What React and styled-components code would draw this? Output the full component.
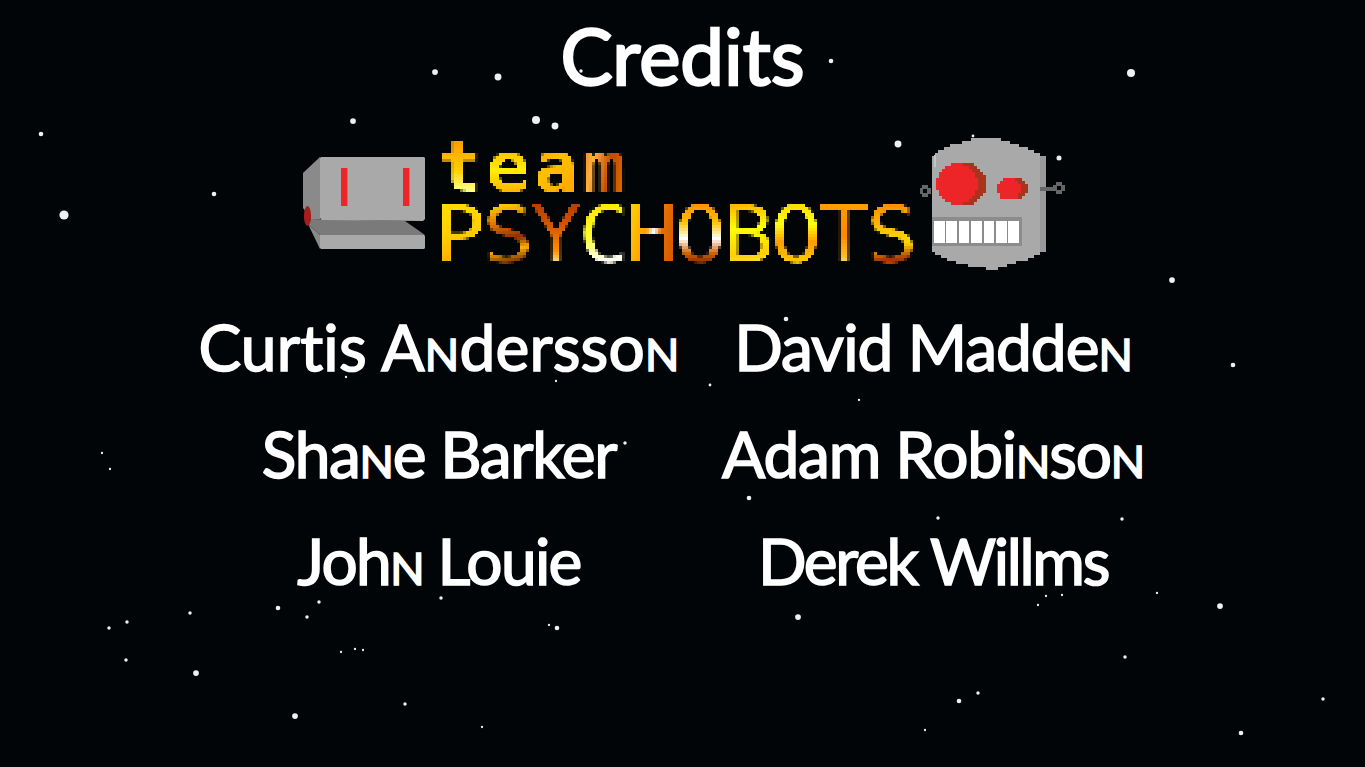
import React from 'react'
import styled, { createGlobalStyle } from 'styled-components'

const GlobalStyle = createGlobalStyle`
  html, body {
    margin: 0;
    background: #020508;
  }
`

const Page = styled.div`
  position: relative;
  width: 1365px;
  height: 767px;
  overflow: hidden;
  background: #020508;
  color: #fff;
  font-family: Lato, "Liberation Sans", sans-serif;
  font-variant-ligatures: none;
`

const Sky = styled.svg`
  position: absolute;
  inset: 0;
`

const Content = styled.div`
  position: relative;
  display: flex;
  flex-direction: column;
  align-items: center;
`

const Title = styled.h1`
  margin: 9px 0 0;
  height: 92px;
  font-size: 78px;
  line-height: 92px;
  font-weight: 400;
  -webkit-text-stroke: 2.4px #fff;
`

const LogoRow = styled.div`
  display: flex;
  align-items: flex-start;
  height: 136px;
  margin-top: 34px;
  padding-left: 3px;
`

const LeftBot = styled.svg`
  width: 125px;
  height: 136px;
  margin-right: 9px;
`

const RightBot = styled.svg`
  width: 146px;
  height: 136px;
  margin-left: 4px;
`

const Wordmark = styled.div`
  width: 480px;
  font-family: "DejaVu Sans Mono", monospace;
  filter: url(#pixelate);
`

const WordRow = styled.div`
  display: flex;
`

const fires = {
  p: 'linear-gradient(165deg, #ffe000 0, #ffd000 45%, #ff9c00 100%)',
  s1: 'linear-gradient(170deg, #ffd000 10%, #e07000 35%, #8a2c00 55%, #ffb000 68%, #5a1400 88%)',
  y: 'linear-gradient(180deg, #b84000 10%, #d85a00 40%, #ff9000 72%, #fff0b0 92%)',
  c: 'linear-gradient(170deg, #ffe600 10%, #ffff30 50%, #ffffff 82%, #ffd000 100%)',
  h: 'linear-gradient(100deg, #ffe000 0, #ffa000 40%, #fff 52%, #e87000 62%, #c85000 100%)',
  o1: 'linear-gradient(180deg, #ff9800 10%, #ffc000 32%, #fff 55%, #d06000 76%, #6a1c00 92%)',
  b: 'linear-gradient(175deg, #ffb800 10%, #ffff00 40%, #ffd000 75%, #ffe880 100%)',
  o2: 'linear-gradient(180deg, #ffe000 10%, #ffff10 35%, #ff9c00 60%, #ffe000 100%)',
  t: 'linear-gradient(180deg, #ff9c00 10%, #ff8800 50%, #ffc020 80%, #ffe890 92%)',
  s2: 'linear-gradient(175deg, #ff9000 10%, #ffc000 40%, #ffd800 62%, #a83400 82%, #e07000 100%)',
  t2: 'linear-gradient(180deg, #ff9c00 10%, #ffd000 55%, #ffff80 85%)',
  e: 'linear-gradient(180deg, #ffc800 30%, #fff000 55%, #ffb000 90%)',
  a: 'linear-gradient(135deg, #ff9000 0, #ffc000 45%, #ffa000 100%)',
  m: 'linear-gradient(100deg, #e87000 0, #ffb040 30%, #c04c00 60%, #e87800 100%)',
}

const Letter = styled.span`
  display: block;
  width: 48px;
  height: ${p => p.$line}px;
  flex: none;
  text-align: center;
  font-size: ${p => p.$size}px;
  font-weight: ${p => p.$weight};
  line-height: ${p => p.$line}px;
  color: transparent;
  transform: scaleX(${p => p.$wide});
  background: ${p => fires[p.$fire]};
  -webkit-background-clip: text;
  background-clip: text;
`

const Names = styled.div`
  display: grid;
  grid-template-columns: 494px 494px;
  grid-auto-rows: 107px;
  margin-top: 22px;
  padding-left: 7px;
`

const Name = styled.div`
  height: 107px;
  font-size: 64px;
  line-height: 107px;
  letter-spacing: ${p => p.$track}px;
  text-align: center;
  white-space: nowrap;
  -webkit-text-stroke: 1.6px #fff;
`

const SmallN = styled.span`
  font-variant: small-caps;
`

const stars = [
  [435, 72, 2.5], [498, 77, 3], [831, 61, 2], [1131, 73, 3.5], [41, 134, 2], [353, 121, 2.5],
  [536, 120, 3.5], [555, 126, 3], [898, 144, 3], [973, 136, 1.2], [214, 194, 2], [64, 215, 4],
  [1059, 158, 2.2], [1172, 280, 2.5], [786, 319, 2], [1233, 365, 2], [346, 377, 1], [710, 385, 1.2],
  [556, 381, 1], [859, 400, 1], [625, 443, 1.5], [102, 453, 1], [110, 469, 1], [749, 498, 2],
  [938, 518, 1.5], [1122, 519, 1.5], [1157, 593, 1], [1220, 606, 2.5], [1038, 605, 1], [1046, 596, 1],
  [1062, 595, 1], [798, 617, 2.5], [1125, 657, 1.5], [441, 598, 1.5], [319, 602, 1.5], [278, 608, 2],
  [307, 617, 1.5], [190, 613, 1.5], [127, 622, 1.5], [109, 628, 1.5], [549, 625, 1], [557, 628, 2],
  [126, 660, 1.5], [196, 673, 2.5], [341, 652, 1], [355, 649, 1], [363, 650, 1], [295, 716, 2.5],
  [405, 704, 1.5], [482, 727, 1], [959, 701, 2], [978, 693, 1.5], [925, 730, 1], [1241, 733, 2],
  [1323, 699, 1.5], [581, 71, 1.5],
]

const people = [
  { name: 'Curtis Andersson', track: 0.2 },
  { name: 'David Madden', track: -1 },
  { name: 'Shane Barker', track: -1.3 },
  { name: 'Adam Robinson', track: -1.2 },
  { name: 'John Louie', track: -1.7 },
  { name: 'Derek Willms', track: -2.3 },
]

const teamLetters = [['t', 't2'], ['e', 'e'], ['a', 'a'], ['m', 'm']]
const psychoLetters = [
  ['P', 'p'], ['S', 's1'], ['Y', 'y'], ['C', 'c'], ['H', 'h'],
  ['O', 'o1'], ['B', 'b'], ['O', 'o2'], ['T', 't'], ['S', 's2'],
]

// the font has capital-shaped n's in the original, so every n gets small caps
const spell = text =>
  text.split(/(n)/).map((part, i) =>
    part === 'n' ? <SmallN key={i}>n</SmallN> : part
  )

const lerp = (points, x) => {
  for (let i = 1; i < points.length; i++) {
    const [x0, y0] = points[i - 1]
    const [x1, y1] = points[i]
    if (x <= x1) return y0 + ((y1 - y0) * (x - x0)) / (x1 - x0)
  }
  return points[points.length - 1][1]
}

const headTop = [[932, 155], [947, 146], [975, 138], [995, 138], [1027, 148], [1045, 157]]
const headBottom = [[932, 252], [947, 260], [975, 268], [995, 269], [1027, 259], [1045, 250]]

const headColumns = []
for (let x = 932; x < 1045; x += 3) {
  const top = Math.round(lerp(headTop, x) / 3) * 3
  const bottom = Math.round(lerp(headBottom, x) / 3) * 3
  headColumns.push([x, top, bottom])
}

// an ellipse made of 3px rows, like the scaled up sprite
const pixelEllipse = (cx, cy, rx, ry) => {
  let d = ''
  for (let y = cy - ry; y < cy + ry; y += 3) {
    const t = (y + 1.5 - cy) / ry
    const half = Math.round((rx * Math.sqrt(Math.max(0, 1 - t * t))) / 3) * 3
    d += `M${cx - half} ${y}h${half * 2}v3h${-half * 2}z`
  }
  return d
}

const TEETH = [0, 1, 2, 3, 4, 5, 6]

const BoxBot = () => (
  <LeftBot viewBox="302 135 125 136">
    <polygon points="303,173 320,157 320,219 311,219 303,208" fill="#8a8a8a" />
    <polygon points="308,224 320,235 320,249 308,224" fill="#8a8a8a" />
    <polygon points="311,219 405,221 425,235 320,235 308,224" fill="#7a7a7a" />
    <polygon points="321,157 424,157 425,158 425,219 423,221 322,220 320,218 320,158" fill="#a9a9a9" />
    <polygon points="320,235 424,235 425,236 425,248 424,249 321,249 320,248" fill="#a9a9a9" />
    <ellipse cx="307.5" cy="216" rx="3.6" ry="10" fill="#a51d1d" />
    <rect x="341" y="168" width="6.4" height="38" fill="#ee2528" />
    <rect x="403" y="168" width="6.4" height="38" fill="#ee2528" />
  </LeftBot>
)

const SkullBot = () => (
  <RightBot viewBox="920 135 146 136" shapeRendering="crispEdges">
    {headColumns.map(([x, top, bottom]) => (
      <rect key={x} x={x} y={top} width="3" height={bottom - top} fill={x >= 1038 ? '#999999' : '#a9a9a9'} />
    ))}
    <rect x="934" y="155" width="2" height="12" fill="#c4c4c4" />
    <path d={pixelEllipse(965, 184, 21, 21)} fill="#a8341c" />
    <path d={pixelEllipse(957, 184, 20, 21)} fill="#ee2528" />
    <path d={pixelEllipse(1013, 189, 15, 11)} fill="#a8341c" />
    <path d={pixelEllipse(1009, 189, 12, 11)} fill="#ee2528" />
    <rect x="932" y="217" width="90" height="29" fill="#8c8c8c" />
    {TEETH.map(i => (
      <rect key={i} x={934 + i * 12.4} y="221" width="10.5" height="21.5" fill="#fff" />
    ))}
    <path d="M922 185h6v3h3v6h-3v3h-6v-3h-3v-6h3zM923 189v4h4v-4z" fill="#666" fillRule="evenodd" />
    <rect x="1040" y="187" width="14" height="4" fill="#666" />
    <path d="M1056 182h6v3h3v6h-3v3h-6v-3h-3v-6h3zM1057 186v4h4v-4z" fill="#666" fillRule="evenodd" />
  </RightBot>
)

export default function App() {
  return (
    <Page>
      <GlobalStyle />
      <svg width="0" height="0" style={{ position: 'absolute' }}>
        <filter id="pixelate" x="0" y="0" width="100%" height="100%">
          <feFlood x="1" y="1" width="1" height="1" />
          <feComposite width="3" height="3" />
          <feTile result="grid" />
          <feComposite in="SourceGraphic" in2="grid" operator="in" />
          <feMorphology operator="dilate" radius="1" />
          <feGaussianBlur stdDeviation="0.35" />
        </filter>
      </svg>
      <Sky width="1365" height="767">
        {stars.map(([x, y, r]) => (
          <circle key={`${x}-${y}`} cx={x} cy={y} r={r * 1.15} fill="#eef0f2" />
        ))}
      </Sky>
      <Content>
        <Title>Credits</Title>
        <LogoRow>
          <BoxBot />
          <Wordmark>
            <WordRow>
              {teamLetters.map(([char, fire]) => (
                <Letter key={fire} $fire={fire} $size={70} $line={64} $weight={700} $wide={1.04}>{char}</Letter>
              ))}
            </WordRow>
            <WordRow>
              {psychoLetters.map(([char, fire]) => (
                <Letter key={fire} $fire={fire} $size={78} $line={72} $weight={400} $wide={1.1}>{char}</Letter>
              ))}
            </WordRow>
          </Wordmark>
          <SkullBot />
        </LogoRow>
        <Names>
          {people.map(({ name, track }) => (
            <Name key={name} $track={track}>{spell(name)}</Name>
          ))}
        </Names>
      </Content>
    </Page>
  )
}
